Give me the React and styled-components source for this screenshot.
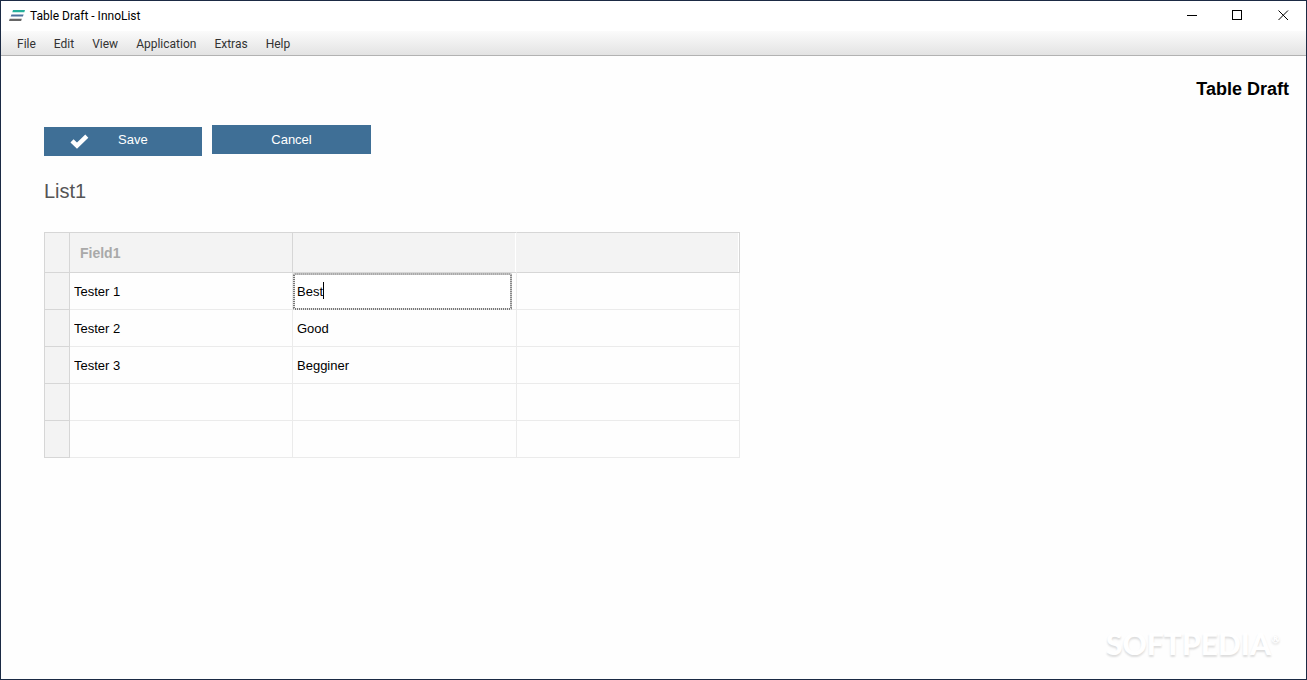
import React, { useState } from 'react';
import styled, { createGlobalStyle } from 'styled-components';

const GlobalStyle = createGlobalStyle`
  * {
    box-sizing: border-box;
  }

  body {
    margin: 0;
    background: #fefefe;
    font-family: "Liberation Sans", Arial, sans-serif;
  }

  button, input {
    font-family: inherit;
    margin: 0;
  }
`;

const Window = styled.div`
  display: flex;
  flex-direction: column;
  position: relative;
  min-height: 100vh;
  border: 1px solid #1b2a44;
`;

const TitleBar = styled.header`
  display: flex;
  align-items: center;
  height: 30px;
  padding-left: 8px;
  background: #fff;
  font-family: Roboto, "Noto Sans", sans-serif;
`;

const WindowTitle = styled.span`
  flex: 1;
  padding-left: 5px;
  font-size: 12px;
  line-height: 16px;
  color: #000;
`;

const WindowButton = styled.button`
  display: flex;
  align-items: center;
  justify-content: center;
  width: 46px;
  height: 30px;
  padding: 0 0 1px;
  border: none;
  background: none;
`;

const MenuBar = styled.nav`
  display: flex;
  align-items: center;
  height: 25px;
  padding-left: 7px;
  background: linear-gradient(#fbfbfb, #e3e3e3);
  border-bottom: 1px solid #b2b2b2;
`;

const MenuItem = styled.button`
  padding: 1px 9px 0;
  border: none;
  background: none;
  font-family: Roboto, "Noto Sans", sans-serif;
  font-size: 12px;
  line-height: 20px;
  color: #333;
`;

const Content = styled.main`
  display: flex;
  flex-direction: column;
  flex: 1;
  padding: 22px 17px 24px 43px;
`;

const PageTitle = styled.h1`
  margin: 0;
  font-size: 18px;
  line-height: 22px;
  text-align: right;
  color: #000;
`;

const ButtonRow = styled.div`
  display: flex;
  align-items: flex-start;
  gap: 10px;
  margin-top: 25px;
`;

const ActionButton = styled.button`
  height: 29px;
  padding: 0;
  border: none;
  background: #3f6f96;
  font-size: 13px;
  line-height: 29px;
  color: #fff;
`;

const SaveButton = styled(ActionButton)`
  display: flex;
  align-items: center;
  gap: 29px;
  width: 158px;
  margin-top: 2px;
  padding-left: 26px;
  line-height: 26px;

  span {
    align-self: flex-start;
  }
`;

const CancelButton = styled(ActionButton)`
  width: 159px;
`;

const ListTitle = styled.h2`
  margin: 23px 0 29px;
  font-size: 20px;
  font-weight: normal;
  line-height: 24px;
  color: #555;
`;

const Table = styled.table`
  width: 696px;
  table-layout: fixed;
  border-collapse: separate;
  border-spacing: 0;
`;

const HeaderCell = styled.th`
  height: 41px;
  padding: 0 0 0 10px;
  background: #f3f3f3;
  border: 0 solid #d6d6d6;
  border-width: 1px 0 1px 0;
  border-right: 1px solid ${(props) => props.$line || '#d6d6d6'};
  box-shadow: ${(props) => (props.$notch ? 'inset -1px 0 #fff' : 'none')};
  font-size: 14px;
  line-height: 20px;
  text-align: left;
  color: #a9a9a9;
`;

const CornerCell = styled.td`
  height: 41px;
  padding: 0;
  background: #f3f3f3;
  border: 1px solid #d6d6d6;
`;

const RowHandle = styled.td`
  padding: 0;
  background: #f3f3f3;
  border: 1px solid #d6d6d6;
  border-top: none;
`;

const Cell = styled.td`
  position: relative;
  height: 37px;
  padding: 0;
  border-right: 1px solid #ebebeb;
  border-bottom: 1px solid #ebebeb;
`;

const CellInput = styled.input`
  display: block;
  width: 100%;
  height: 36px;
  padding: 0 4px;
  border: none;
  outline: none;
  background: transparent;
  font-size: 13px;
  color: #000;
`;

// 편집 중인 셀: 촘촘한 점선 테두리
const ActiveInput = styled(CellInput)`
  position: relative;
  width: calc(100% - 4px);
  height: 37px;
  margin-bottom: -1px;
  border-radius: 2px;
  caret-color: transparent;
  background:
    repeating-linear-gradient(90deg, #aaa 0 1px, #c4c4c4 1px 2px) top / 100% 2px no-repeat,
    repeating-linear-gradient(90deg, #777 0 1px, #e4e4e4 1px 2px) bottom / 100% 2px no-repeat,
    repeating-linear-gradient(#777 0 1px, #e4e4e4 1px 2px) left / 2px 100% no-repeat,
    repeating-linear-gradient(#888 0 1px, #ccc 1px 2px) right / 2px 100% no-repeat,
    #fff;
`;

const Caret = styled.span`
  position: absolute;
  top: 9px;
  left: 30px;
  width: 1px;
  height: 17px;
  background: #000;
`;

const Watermark = styled.div`
  position: absolute;
  right: 26px;
  bottom: 18px;
  font-family: Lato, sans-serif;
  font-size: 30px;
  font-weight: 900;
  line-height: 36px;
  color: #fff;
  text-shadow: 0 2px 2px #ddd;

  sup {
    font-size: 11px;
    line-height: 1;
    vertical-align: 12px;
  }
`;

const columns = ['Field1', '', ''];

const initialRows = [
  ['Tester 1', 'Best', ''],
  ['Tester 2', 'Good', ''],
  ['Tester 3', 'Begginer', ''],
  ['', '', ''],
  ['', '', ''],
];

const menus = ['File', 'Edit', 'View', 'Application', 'Extras', 'Help'];

function AppLogo() {
  return (
    <svg width="16" height="12" viewBox="0 0 16 12" aria-hidden="true">
      <path d="M4 0H16L15.3 2.2H3.3Z" fill="#25b09b" />
      <path d="M2.4 4.4H14.6L13.9 6.4H1.7Z" fill="#4b719c" />
      <path d="M0.7 8.8H12.8L12.1 11H0Z" fill="#666" />
    </svg>
  );
}

function CheckIcon() {
  return (
    <svg width="19" height="15" viewBox="0 0 19 15" aria-hidden="true">
      <path d="M2 6.8L7 11.6L16.8 2.2" fill="none" stroke="#fff" strokeWidth="4.4" />
    </svg>
  );
}

function App() {
  const [rows, setRows] = useState(initialRows);

  const handleChange = (rowIndex, colIndex, value) => {
    setRows(
      rows.map((row, r) =>
        r === rowIndex ? row.map((cell, c) => (c === colIndex ? value : cell)) : row
      )
    );
  };

  return (
    <Window>
      <GlobalStyle />
      <TitleBar>
        <AppLogo />
        <WindowTitle>Table Draft - InnoList</WindowTitle>
        <WindowButton aria-label="Minimize">
          <svg width="11" height="11" shapeRendering="crispEdges">
            <path d="M1 5.5H11" stroke="#000" />
          </svg>
        </WindowButton>
        <WindowButton aria-label="Maximize">
          <svg width="11" height="11" shapeRendering="crispEdges">
            <rect x="0.5" y="0.5" width="9" height="9" fill="none" stroke="#000" />
          </svg>
        </WindowButton>
        <WindowButton aria-label="Close">
          <svg width="11" height="11">
            <path d="M0.5 0.5L10 10M10 0.5L0.5 10" stroke="#000" strokeWidth="1" />
          </svg>
        </WindowButton>
      </TitleBar>
      <MenuBar>
        {menus.map((menu) => (
          <MenuItem key={menu}>{menu}</MenuItem>
        ))}
      </MenuBar>
      <Content>
        <PageTitle>Table Draft</PageTitle>
        <ButtonRow>
          <SaveButton type="button">
            <CheckIcon />
            <span>Save</span>
          </SaveButton>
          <CancelButton type="button">Cancel</CancelButton>
        </ButtonRow>
        <ListTitle>List1</ListTitle>
        <Table>
          <colgroup>
            <col style={{ width: 26 }} />
            <col style={{ width: 223 }} />
            <col style={{ width: 224 }} />
            <col style={{ width: 223 }} />
          </colgroup>
          <thead>
            <tr>
              <CornerCell />
              {columns.map((name, c) => (
                <HeaderCell
                  key={c}
                  scope="col"
                  $notch={c > 0}
                  $line={c === 1 ? '#f3f3f3' : undefined}
                >
                  {name}
                </HeaderCell>
              ))}
            </tr>
          </thead>
          <tbody>
            {rows.map((row, r) => (
              <tr key={r}>
                <RowHandle />
                {row.map((value, c) => {
                  const active = r === 0 && c === 1;
                  const Input = active ? ActiveInput : CellInput;
                  return (
                    <Cell key={c}>
                      <Input
                        type="text"
                        aria-label={`Row ${r + 1}, column ${c + 1}`}
                        value={value}
                        onChange={(e) => handleChange(r, c, e.target.value)}
                      />
                      {active && <Caret />}
                    </Cell>
                  );
                })}
              </tr>
            ))}
          </tbody>
        </Table>
      </Content>
      <Watermark>
        SOFTPEDIA<sup>®</sup>
      </Watermark>
    </Window>
  );
}

export default App;
